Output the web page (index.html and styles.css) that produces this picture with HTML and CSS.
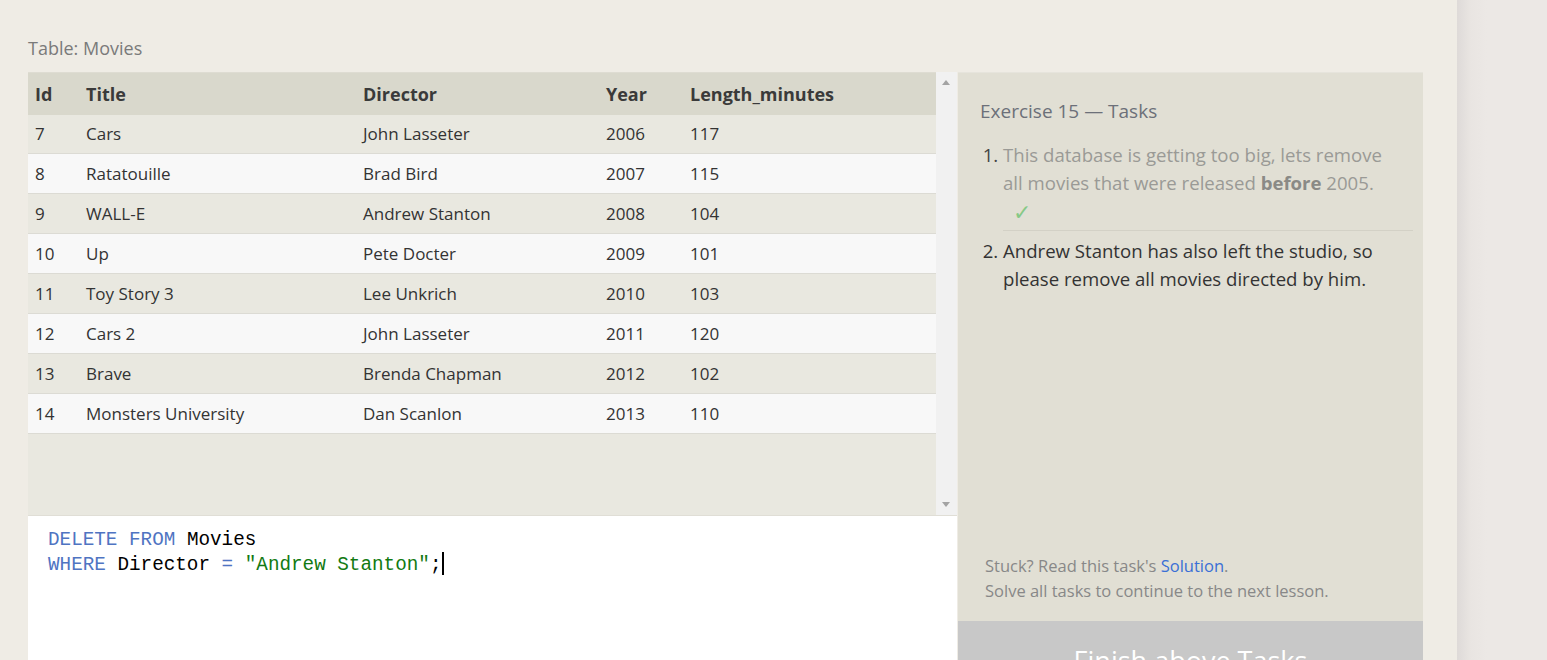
FILE: index.html
```html
<!DOCTYPE html>
<html>
<head>
<meta charset="utf-8">
<link rel="stylesheet" href="styles.css">
</head>
<body>
<div class="page">
  <div class="main">
    <div class="table-label">Table: Movies</div>
    <div class="workspace">
      <div class="left">
        <div class="results">
          <div class="table-area">
            <table class="movies">
              <colgroup>
                <col class="c-id"><col class="c-title"><col class="c-dir"><col class="c-year"><col>
              </colgroup>
              <thead>
                <tr><th>Id</th><th>Title</th><th>Director</th><th>Year</th><th>Length_minutes</th></tr>
              </thead>
              <tbody>
                <tr><td>7</td><td>Cars</td><td>John Lasseter</td><td>2006</td><td>117</td></tr>
                <tr><td>8</td><td>Ratatouille</td><td>Brad Bird</td><td>2007</td><td>115</td></tr>
                <tr><td>9</td><td>WALL-E</td><td>Andrew Stanton</td><td>2008</td><td>104</td></tr>
                <tr><td>10</td><td>Up</td><td>Pete Docter</td><td>2009</td><td>101</td></tr>
                <tr><td>11</td><td>Toy Story 3</td><td>Lee Unkrich</td><td>2010</td><td>103</td></tr>
                <tr><td>12</td><td>Cars 2</td><td>John Lasseter</td><td>2011</td><td>120</td></tr>
                <tr><td>13</td><td>Brave</td><td>Brenda Chapman</td><td>2012</td><td>102</td></tr>
                <tr><td>14</td><td>Monsters University</td><td>Dan Scanlon</td><td>2013</td><td>110</td></tr>
              </tbody>
            </table>
          </div>
          <div class="scrollbar">
            <span class="arrow up"></span>
            <span class="arrow down"></span>
          </div>
        </div>
        <div class="editor">
          <div class="code-line"><span class="kw">DELETE</span> <span class="kw">FROM</span> Movies</div>
          <div class="code-line"><span class="kw">WHERE</span> Director <span class="kw">=</span> <span class="str">"Andrew Stanton"</span>;<span class="cursor"></span></div>
        </div>
      </div>
      <div class="right">
        <div class="tasks">
          <div class="tasks-title">Exercise 15 — Tasks</div>
          <ol class="task-list">
            <li class="task done"><span class="task-text">This database is getting too big, lets remove all movies that were released <b>before</b> 2005.</span>
              <span class="check">✓</span>
            </li>
            <li class="task"><span class="task-text">Andrew Stanton has also left the studio, so please remove all movies directed by him.</span></li>
          </ol>
        </div>
        <div class="help">
          <div>Stuck? Read this task's <a class="solution" href="#">Solution</a>.</div>
          <div>Solve all tasks to continue to the next lesson.</div>
        </div>
        <div class="finish">Finish above Tasks</div>
      </div>
    </div>
  </div>
  <div class="gutter"></div>
</div>
</body>
</html>
```
FILE: styles.css
```css
* { box-sizing: border-box; }
html, body { margin: 0; padding: 0; height: 100%; overflow: hidden; }
body {
  font-family: "Open Sans", "Noto Sans", sans-serif;
  color: #333;
  background: #efece5;
}
.page { display: flex; height: 660px; overflow: hidden; }
.main {
  width: 1457px;
  background: #efece5;
  padding: 36px 34px 0 28px;
}
.gutter {
  flex: 1;
  background: linear-gradient(to right, #dedad8 0px, #e9e5e2 14px, #ece8e5 30px);
}
.table-label {
  font-size: 18px;
  line-height: 24px;
  color: #7a7a7a;
  margin-bottom: 12px;
}
.workspace { display: flex; height: 640px; gap: 1px; }
.left { width: 929px; display: flex; flex-direction: column; }
.results { display: flex; height: 444px; border-bottom: 1px solid #e0ded6; }
.table-area { flex: 1; background: #e9e8e0; }
.movies {
  width: 100%;
  border-collapse: collapse;
  table-layout: fixed;
  font-size: 17px;
}
.c-id { width: 51px; }
.c-title { width: 277px; }
.c-dir { width: 243px; }
.c-year { width: 84px; }
.movies th {
  background: #d9d8cc;
  height: 42px;
  text-align: left;
  font-weight: 700;
  font-size: 18px;
  color: #3a3a3a;
  padding: 0 7px;
  border-top: 1px solid #dedcd2;
}
.movies td {
  height: 40px;
  padding: 0 7px;
  color: #333;
  border-top: 1px solid #dcdbd4;
}
.movies tbody tr:first-child td { border-top: none; height: 39px; }
.movies tbody tr:nth-child(odd) td { background: #e9e8e0; }
.movies tbody tr:nth-child(even) td { background: #f8f8f8; }
.movies tbody tr:last-child td { border-bottom: 1px solid #dcdbd4; }
.scrollbar {
  width: 21px;
  background: #f1f1f1;
  position: relative;
}
.arrow {
  position: absolute;
  left: 6px;
  width: 0; height: 0;
  border-left: 4px solid transparent;
  border-right: 4px solid transparent;
}
.arrow.up { top: 8px; border-bottom: 5px solid #a3a3a3; }
.arrow.down { bottom: 8px; border-top: 5px solid #a3a3a3; }
.editor {
  flex: 1;
  background: #fff;
  padding: 12px 20px;
  font-family: "Liberation Mono", "DejaVu Sans Mono", monospace;
  font-size: 19.3px;
  line-height: 24px;
  color: #000;
}
.code-line { white-space: pre; }
.kw { color: #4f74c2; }
.str { color: #127a12; }
.cursor {
  display: inline-block;
  width: 2px;
  height: 23px;
  background: #000;
  margin-left: 1px;
  vertical-align: -5px;
}
.right {
  width: 465px;
  background: #e1dfd4;
  display: flex;
  flex-direction: column;
  border-top: 1px solid #e6e4dc;
}
.tasks { flex: 1; padding: 25px 10px 0 22px; }
.tasks-title {
  font-size: 19px;
  line-height: 26px;
  color: #6c7079;
  margin-bottom: 17px;
}
.task-list {
  margin: 0;
  padding: 0 0 0 23px;
  font-size: 18.6px;
  line-height: 28px;
}
.task { padding: 0 0 6px 0; }
.task-text { display: block; padding-right: 16px; }
.task::marker { color: #333; }
.task.done { color: #9a9a96; border-bottom: 1px solid #d3d1c6; padding-bottom: 5px; margin-bottom: 6px; }
.task.done::marker { color: #444; }
.task.done b { color: #8a8a86; }
.check {
  display: block;
  padding-left: 10px;
  color: #86c986;
  font-size: 22px;
  line-height: 28px;
}
.help {
  padding: 0 20px 18px 27px;
  font-size: 16.5px;
  line-height: 25px;
  color: #888;
}
.solution { color: #3a6fd6; text-decoration: none; }
.finish {
  height: 91px;
  background: #c8c8c8;
  color: #fff;
  font-size: 27px;
  text-align: center;
  padding-top: 21px;
}
```
